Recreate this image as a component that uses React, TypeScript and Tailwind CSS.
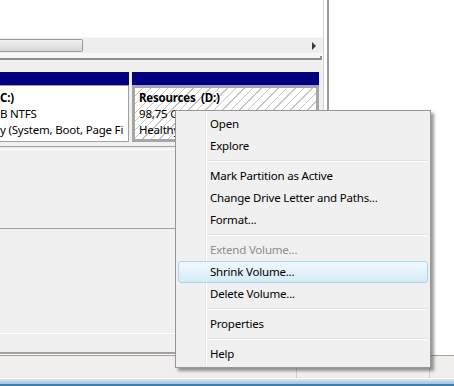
import React from "react";

function Item({ label, disabled }: { label: string; disabled?: boolean }) {
  return (
    <div
      className={
        "h-[22px] flex items-center pl-[32px] whitespace-nowrap " +
        (disabled ? "text-[#8d8d8d]" : "text-black")
      }
    >
      {label}
    </div>
  );
}

function Sep() {
  return (
    <div className="h-[8px] flex items-center pl-[27px]">
      <div className="w-full h-[2px] border-t border-[#e0e0e0] border-b border-b-white" />
    </div>
  );
}

export default function App() {
  return (
    <div className="relative w-[454px] h-[386px] overflow-hidden bg-white font-['Noto_Sans',sans-serif] text-[11.5px] tracking-[-0.2px] text-black">
      <div className="flex flex-col h-full">
        <div className="flex h-[354px]">
          {/* left pane */}
          <div className="w-[323px] flex flex-col">
            <div className="h-[37px] bg-white" />
            <div className="h-[16px] bg-[#eeeeee] border-t border-[#f9f9f9] flex items-center">
              <div className="w-[83px] h-[13px] rounded-r-[2px] border border-l-0 border-[#9a9a9a] bg-gradient-to-b from-[#f4f4f4] to-[#d5d5d5]" />
              <svg className="ml-auto mr-[6px]" width="5" height="8" viewBox="0 0 5 8">
                <polygon points="0,0 4,4 0,8" fill="#3a3a3a" />
              </svg>
            </div>
            <div className="h-[7px] bg-[#f7f7f7] flex flex-col justify-end">
              <div className="h-[4px] border-b-2 border-r-2 border-[#8f8f8f] mr-[1px]" />
            </div>
            <div className="flex-1 bg-[#f0f0f0] flex flex-col pt-[12px]">
              <div className="flex gap-[3px] h-[70px]">
                <div className="w-[129px] flex flex-col">
                  <div className="h-[13px] bg-[#000080]" />
                  <div className="flex-1 bg-white border border-l-0 border-[#a0a0a0] pt-[4px] leading-[16px] whitespace-nowrap overflow-hidden">
                    <div className="font-bold">C:)</div>
                    <div>B NTFS</div>
                    <div>y (System, Boot, Page Fi</div>
                  </div>
                </div>
                <div className="w-[187px] flex flex-col">
                  <div className="h-[13px] bg-[#000080]" />
                  <div className="flex-1 border-[3px] border-[#a6a6a6] bg-[repeating-linear-gradient(135deg,#ffffff_0px,#ffffff_5px,#c4c4c4_5px,#c4c4c4_6px)] pl-[4px] pt-[2px] leading-[16px] whitespace-nowrap overflow-hidden">
                    <div className="font-bold">Resources&nbsp;&nbsp;(D:)</div>
                    <div>98,75 GB NTFS</div>
                    <div>Healthy (Primary Partition)</div>
                  </div>
                </div>
              </div>
              <div className="mt-[4px] h-[1px] bg-[#a0a0a0]" />
              <div className="mt-[2px] h-[1px] bg-white" />
              <div className="h-[78px]" />
              <div className="h-[1px] bg-[#a0a0a0]" />
              <div className="h-[104px]" />
              <div className="h-[1px] bg-white" />
              <div className="flex-1" />
              <div className="h-[2px] bg-[#a0a0a0]" />
            </div>
          </div>
          {/* splitter */}
          <div className="w-[6px] bg-white border-l border-[#d4d4d4] border-r-2 border-r-[#9b9b9b]" />
          {/* actions pane */}
          <div className="flex-1 bg-white" />
        </div>
        {/* status bar */}
        <div className="h-[1px] bg-white" />
        <div className="h-[1px] bg-[#a0a0a0]" />
        <div className="h-[22px] bg-[#f0efed] flex">
          <div className="w-[297px] border-r border-[#cfcfcf]" />
          <div className="w-[133px] border-r border-[#cfcfcf]" />
          <div className="flex-1" />
        </div>
        <div className="h-[1px] bg-white" />
        <div className="h-[7px] bg-gradient-to-b from-[#dce9f6] via-[#bcd5ed] to-[#9cc3e2] border-b-2 border-[#3b7fa9]" />
      </div>

      {/* context menu */}
      <div className="absolute left-[175px] top-[110px] w-[256px] border border-[#979797] bg-[#f0f0f0] p-[2px] shadow-[3px_3px_3px_rgba(0,0,0,0.4)]">
        <div className="absolute left-[29px] top-[2px] bottom-[2px] w-[2px] border-l border-[#e2e3e3] border-r border-r-white" />
        <Item label="Open" />
        <Item label="Explore" />
        <Sep />
        <Item label="Mark Partition as Active" />
        <Item label="Change Drive Letter and Paths..." />
        <Item label="Format..." />
        <Sep />
        <Item label="Extend Volume..." disabled />
        <div className="relative h-[22px] flex items-center pl-[31px] rounded-[3px] border border-[#a8d8eb] bg-gradient-to-b from-[#f1f8fd] to-[#d6ebf7] whitespace-nowrap">
          Shrink Volume...
        </div>
        <Item label="Delete Volume..." />
        <Sep />
        <Item label="Properties" />
        <Sep />
        <Item label="Help" />
      </div>
    </div>
  );
}
